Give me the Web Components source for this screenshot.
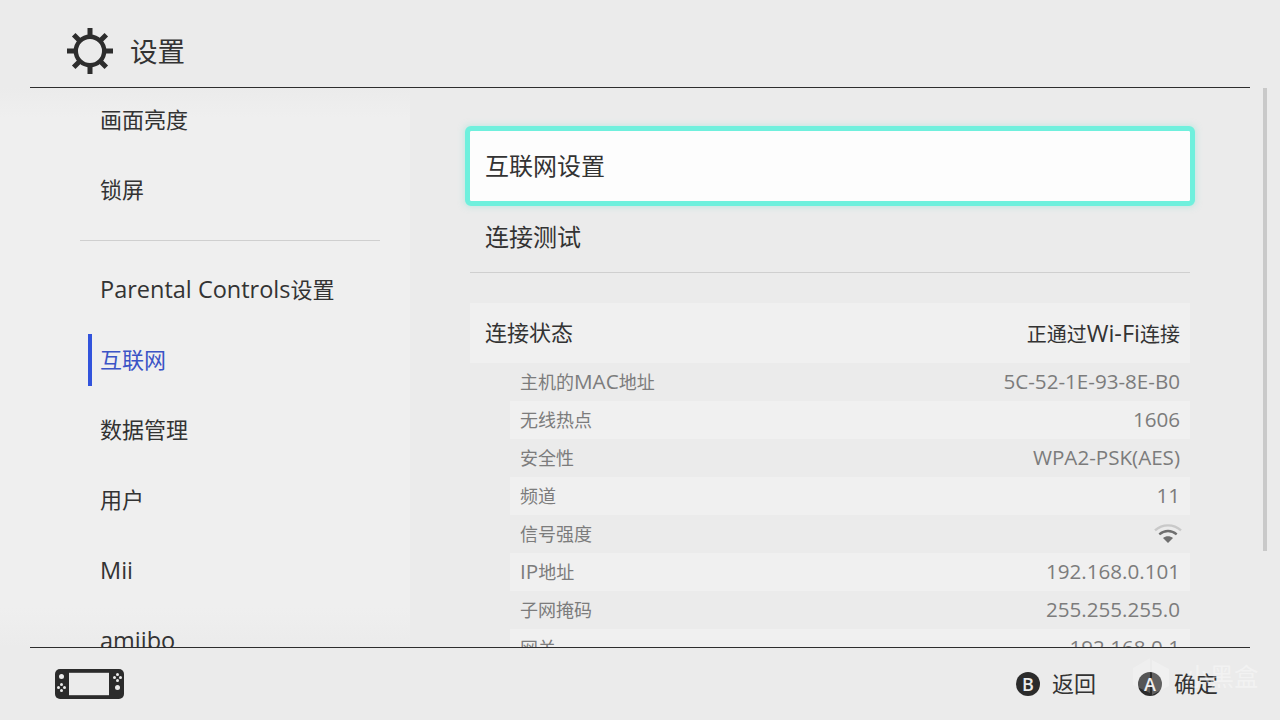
<!DOCTYPE html>
<html lang="zh"><head><meta charset="utf-8"><title>设置</title>
<style>
html,body{margin:0;height:100%}
body{width:1280px;height:720px;overflow:hidden;background:#ebebeb;color:#333;font-family:"Open Sans","Noto Sans CJK SC",sans-serif;display:flex;flex-direction:column;position:relative}
.l1{font-size:23.5px}
.l2{font-size:20.7px}
</style></head><body>
<sw-header>设置</sw-header>
<sw-content>
  <sw-sidebar>
    <sw-nav>画面亮度</sw-nav>
    <sw-nav>锁屏</sw-nav>
    <sw-sep></sw-sep>
    <sw-nav><span class="l1">Parental Controls</span>设置</sw-nav>
    <sw-nav active>互联网</sw-nav>
    <sw-nav>数据管理</sw-nav>
    <sw-nav>用户</sw-nav>
    <sw-nav latin><span class="l1">Mii</span></sw-nav>
    <sw-nav latin><span class="l1">amiibo</span></sw-nav>
  </sw-sidebar>
  <sw-pane>
    <sw-action focused>互联网设置</sw-action>
    <sw-action divided>连接测试</sw-action>
    <sw-status><span slot="label">连接状态</span>正通过<span class="l1">Wi-Fi</span>连接</sw-status>
    <sw-info><span slot="label">主机的<span class="l2">MAC</span>地址</span>5C-52-1E-93-8E-B0</sw-info>
    <sw-info light><span slot="label">无线热点</span>1606</sw-info>
    <sw-info><span slot="label">安全性</span>WPA2-PSK(AES)</sw-info>
    <sw-info light><span slot="label">频道</span>11</sw-info>
    <sw-info><span slot="label">信号强度</span><svg width="28" height="22" viewBox="0 0 28 22" style="display:block;margin-right:-2px"><path d="M1 8.400C8.500 1.700 19.500 1.700 27 8.400" fill="none" stroke="#c9c9c9" stroke-width="2.400"/><path d="M5.300 12.300C10.600 7.900 17.400 7.900 22.700 12.300" fill="none" stroke="#6f6f6f" stroke-width="2.400"/><path d="M9 16C11.900 13.600 16.100 13.600 19 16L14 21Z" fill="#6f6f6f"/></svg></sw-info>
    <sw-info light><span slot="label"><span class="l2">IP</span>地址</span>192.168.0.101</sw-info>
    <sw-info><span slot="label">子网掩码</span>255.255.255.0</sw-info>
    <sw-info light><span slot="label">网关</span>192.168.0.1</sw-info>
  </sw-pane>
  <sw-scrollbar></sw-scrollbar>
</sw-content>
<sw-footer>
  <sw-hint key="B">返回</sw-hint>
  <sw-hint key="A">确定</sw-hint>
</sw-footer>
<sw-watermark>小黑盒</sw-watermark>
<script>
function def(name,css,html){
  customElements.define(name,class extends HTMLElement{
    constructor(){super();const r=this.attachShadow({mode:'open'});r.innerHTML='<style>'+css+'</style>'+(typeof html==='function'?html(this):html);}
  });
}
def('sw-header',`:host{display:flex;align-items:center;margin:0 30px;padding:15px 0 0 36px;gap:16px;border-bottom:1px solid #2d2d2d;flex:none;font-size:27.5px;box-sizing:content-box;height:72px}
svg{display:block;flex:none}span{padding-bottom:3px}`,
`<svg width="48" height="48" viewBox="0 0 48 48"><g fill="none" stroke="#2d2d2d"><circle cx="24" cy="24" r="14.200" stroke-width="4.400"/><path stroke-width="5" d="M24 1V10M24 38V47M1 24H10M38 24H47M7.700 7.700L14 14M34 34L40.300 40.300M40.300 7.700L34 14M14 34L7.700 40.300"/></g></svg><span><slot></slot></span>`);
def('sw-content',`:host{display:grid;grid-template-columns:410px 840px 17px;height:559px;flex:none;overflow:hidden}`,`<slot></slot>`);
def('sw-sidebar',`:host{display:block;background:linear-gradient(#ebebeb,#efefef 30px,#efefef 520px,#ebebeb);overflow:hidden;height:559px;padding-left:30px}
.in{margin-top:-3px;display:flex;flex-direction:column}`,`<div class="in"><slot></slot></div>`);
def('sw-nav',`:host{display:flex;align-items:center;height:70px;padding:0 0 4px 70px;font-size:22px;position:relative;flex:none;white-space:nowrap;box-sizing:border-box}
:host([latin]){padding-bottom:0}
:host([active]){color:#3b54c6}
:host([active])::before{content:"";position:absolute;left:58px;top:9px;bottom:9px;width:4px;background:#3253dc}
.t{display:block}`,`<span class="t"><slot></slot></span>`);
def('sw-sep',`:host{display:flex;align-items:center;height:30px;flex:none;padding:0 30px 0 50px}
i{display:block;height:1px;width:100%;background:#cfcfcf}`,`<i></i>`);
def('sw-pane',`:host{display:flex;flex-direction:column;padding:43px 60px 0;overflow:hidden;height:559px;box-sizing:border-box}`,`<slot></slot>`);
def('sw-action',`:host{display:flex;align-items:center;height:70px;padding:0 0 4px 15px;font-size:24px;flex:none;box-sizing:border-box}
:host([focused]){background:#fdfdfd;outline:5px solid #6ff0dd;border-radius:1px;box-shadow:0 0 7px 5px rgba(90,220,200,.35);position:relative}
:host([divided]){height:72px;border-bottom:1px solid #cfcfcf;padding:0 0 3px 15px;margin-bottom:30px}`,`<slot></slot>`);
def('sw-status',`:host{display:flex;align-items:center;justify-content:space-between;height:60px;padding:0 10px 4px 15px;background:#f0f0f0;font-size:22px;flex:none;box-sizing:border-box}
.v{font-size:20px;padding-top:4px}`,`<span><slot name="label"></slot></span><span class="v"><slot></slot></span>`);
def('sw-info',`:host{display:flex;align-items:center;justify-content:space-between;height:38px;margin-left:40px;padding:0 10px 2px;font-size:18px;color:#7c7c7c;flex:none;box-sizing:border-box}
:host([light]){background:#f0f0f0}
.v{font-size:20.6px}`,`<span><slot name="label"></slot></span><span class="v"><slot></slot></span>`);
def('sw-scrollbar',`:host{display:block;width:4px;height:463px;background:#c9c9c9;margin-left:13px}`,``);
def('sw-footer',`:host{display:flex;align-items:center;height:72px;margin:0 30px;padding:0 32px 4px 25px;border-top:1px solid #2d2d2d;flex:none;gap:42px;font-size:22px;position:relative;box-sizing:border-box;justify-content:flex-end}
svg{position:absolute;left:25px;top:21px;display:block}`,
`<svg width="69" height="30" viewBox="0 0 69 30"><rect width="69" height="30" rx="5" fill="#2b2b2b"/><rect x="14" y="3.800" width="40" height="22.400" fill="#ebebeb"/><g fill="#ebebeb"><circle cx="6.500" cy="7.500" r="2.500"/><circle cx="6.500" cy="15.500" r="1.500"/><circle cx="6.500" cy="21.500" r="1.500"/><circle cx="3.500" cy="18.500" r="1.500"/><circle cx="9.500" cy="18.500" r="1.500"/><circle cx="62.500" cy="18.500" r="2.500"/><circle cx="62.500" cy="5.500" r="1.500"/><circle cx="62.500" cy="11.500" r="1.500"/><circle cx="59.500" cy="8.500" r="1.500"/><circle cx="65.500" cy="8.500" r="1.500"/></g></svg><slot></slot>`);
def('sw-hint',`:host{display:flex;align-items:center;gap:12px;font-size:22px}
b{display:flex;align-items:center;justify-content:center;width:24px;height:24px;border-radius:50%;background:#2b2b2b;color:#ebebeb;font:600 18px "Open Sans",sans-serif;position:relative;top:2px}`,
h=>`<b>${h.getAttribute('key')}</b><slot></slot>`);
def('sw-watermark',`:host{position:absolute;left:1133px;top:657px;display:flex;align-items:center;gap:16px;font-size:24.5px;line-height:1;color:rgba(255,255,255,.38);pointer-events:none}
svg{display:block}`,
`<svg width="36" height="40" viewBox="0 0 36 40"><path d="M0 11L17 1V36L0 28Z" fill="rgba(255,255,255,.2)"/><path d="M19 3L36 12V29L19 38Z" fill="rgba(255,255,255,.26)"/></svg><span><slot></slot></span>`);
</script>
</body></html>
